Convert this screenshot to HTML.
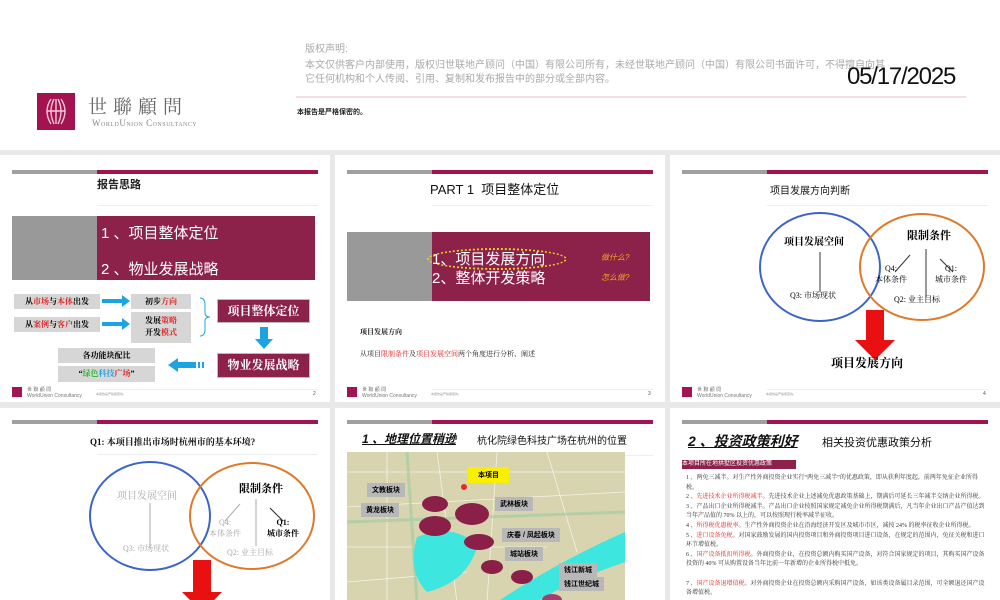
<!DOCTYPE html>
<html><head><meta charset="utf-8"><style>
*{margin:0;padding:0;box-sizing:border-box}
body{width:1000px;height:600px;position:relative;overflow:hidden;background:#e9e9e9;font-family:"Liberation Sans","Noto Sans CJK SC",sans-serif}
.a{position:absolute;white-space:nowrap}
.s{position:absolute;background:#fff;overflow:hidden}
.bg{position:absolute;left:12px;top:15px;width:85px;height:4px;background:#a0a0a0}
.bm{position:absolute;left:97px;top:15px;width:221px;height:4px;background:#a3134f}
.ln{position:absolute;left:97px;top:50px;width:221px;height:1px;background:#eee}
.serif{font-family:"Liberation Serif","Noto Serif CJK SC",serif}
.gb{position:absolute;background:#d6d6d6;font-size:8px;font-weight:bold;text-align:center;font-family:"Liberation Serif","Noto Serif CJK SC",serif}
.mb{position:absolute;background:#8c2249;color:#fff;font-weight:bold;text-align:center;font-family:"Liberation Serif","Noto Serif CJK SC",serif;border:1px solid #bbb}
.r{color:#e02020}
.lab{position:absolute;background:#b8b8b8;font-size:7px;font-weight:bold;padding:2px 5px}
</style></head><body>
<!-- title slide -->
<div class="s" style="left:0;top:0;width:1000px;height:150px">
<svg class="a" style="left:37px;top:93px" width="38" height="37" viewBox="0 0 38 37"><rect width="38" height="37" fill="#a3134f"/><g fill="none" stroke="#f5c8d8" stroke-width="1.4"><path d="M14 6 Q6 18 14 31"/><path d="M24 6 Q32 18 24 31"/><path d="M17 6 Q11 18 17 31"/><path d="M21 6 Q27 18 21 31"/><path d="M10 18 H28"/><path d="M19 6 V31"/></g></svg>
<div class="a serif" style="left:88px;top:92px;font-size:19px;color:#666;letter-spacing:6px">世聯顧問</div>
<div class="a serif" style="left:92px;top:118px;font-size:9px;color:#888;font-variant:small-caps;letter-spacing:.5px">WorldUnion Consultancy</div>
<div class="a" style="left:305px;top:40px;font-size:10px;color:#aaa">版权声明:</div>
<div class="a" style="left:305px;top:59px;font-size:10px;color:#aaa;line-height:14px">本文仅供客户内部使用，版权归世联地产顾问（中国）有限公司所有，未经世联地产顾问（中国）有限公司书面许可，不得擅自向其<br>它任何机构和个人传阅、引用、复制和发布报告中的部分或全部内容。</div>
<div class="a" style="left:847px;top:63px;font-size:24px;color:#111;letter-spacing:-1.2px">05/17/2025</div>
<div class="a" style="left:296px;top:96px;width:670px;height:2px;background:#f3e0e6"></div>
<div class="a" style="left:297px;top:107px;font-size:7px;font-weight:bold;color:#222">本报告是严格保密的。</div>
</div>

<!-- slide 2 -->
<div class="s" style="left:0;top:155px;width:330px;height:247px">
<div class="bg"></div><div class="bm"></div><div class="ln"></div>
<div class="a" style="left:97px;top:21px;font-size:11px;font-weight:bold;color:#222">报告思路</div>
<div class="a" style="left:12px;top:61px;width:85px;height:64px;background:#999"></div>
<div class="a" style="left:97px;top:61px;width:218px;height:64px;background:#8c2249"></div>
<div class="a" style="left:101px;top:67px;font-size:15px;color:#fff">1 、项目整体定位</div>
<div class="a" style="left:101px;top:103px;font-size:15px;color:#fff">2 、物业发展战略</div>
<g></g>
<div class="gb" style="left:14px;top:139px;width:86px;height:15px;line-height:15px">从<span class="r">市场</span>与<span class="r">本体</span>出发</div>
<div class="gb" style="left:14px;top:162px;width:86px;height:15px;line-height:15px">从<span class="r">案例</span>与<span class="r">客户</span>出发</div>
<svg class="a" style="left:102px;top:140px" width="28" height="40"><path d="M0 4h20v-4l8 6-8 6v-4H0z" fill="#1ca4e0"/><path d="M0 27h20v-4l8 6-8 6v-4H0z" fill="#1ca4e0"/></svg>
<div class="gb" style="left:131px;top:139px;width:60px;height:15px;line-height:15px">初步<span class="r">方向</span></div>
<div class="gb" style="left:131px;top:157px;width:60px;height:31px;line-height:12px;padding-top:3px">发展<span class="r">策略</span><br>开发<span class="r">模式</span></div>
<svg class="a" style="left:198px;top:142px" width="14" height="40"><path d="M2 1 Q7 1 7 8 V16 Q7 20 12 20 Q7 20 7 24 V32 Q7 39 2 39" fill="none" stroke="#1ca4e0" stroke-width="1"/></svg>
<div class="mb" style="left:217px;top:144px;width:93px;height:24px;line-height:22px;font-size:12px">项目整体定位</div>
<svg class="a" style="left:255px;top:172px" width="18" height="22"><path d="M5 0h8v12h5l-9 10-9-10h5z" fill="#1ca4e0"/></svg>
<div class="mb" style="left:217px;top:198px;width:93px;height:25px;line-height:23px;font-size:12px">物业发展战略</div>
<svg class="a" style="left:168px;top:203px" width="38" height="14"><path d="M0 7l10-7v4h18v6H10v4z" fill="#1ca4e0"/><rect x="30" y="4" width="2" height="6" fill="#1ca4e0"/><rect x="34" y="4" width="2" height="6" fill="#1ca4e0"/></svg>
<div class="gb" style="left:58px;top:193px;width:97px;height:15px;line-height:15px">各功能块配比</div>
<div class="gb" style="left:58px;top:211px;width:97px;height:16px;line-height:16px">“<span style="color:#2db32d">绿色</span><span style="color:#20a0e0">科技</span><span class="r">广场</span>”</div>
<div class="a" style="left:12px;top:232px;width:10px;height:10px;background:#a3134f"></div>
<div class="a" style="left:27px;top:231px;font-size:5px;color:#777">世 聯 顧 問<br>WorldUnion Consultancy</div>
<div class="a" style="left:97px;top:234px;width:221px;height:1px;background:#eee"></div>
<div class="a" style="left:96px;top:237px;font-size:3px;color:#999">本报告是严格保密的。</div>
<div class="a" style="left:313px;top:236px;font-size:5px;color:#555">2</div>
</div>

<!-- slide 3 -->
<div class="s" style="left:335px;top:155px;width:330px;height:247px">
<div class="bg"></div><div class="bm"></div><div class="ln"></div>
<div class="a" style="left:95px;top:24px;font-size:13px;color:#111">PART 1 &nbsp;项目整体定位</div>
<div class="a" style="left:12px;top:77px;width:85px;height:69px;background:#999"></div>
<div class="a" style="left:97px;top:77px;width:218px;height:69px;background:#8c2249"></div>
<div class="a" style="left:92px;top:93px;width:140px;height:22px;border:2px dotted #e8d020;border-radius:50%"></div>
<div class="a" style="left:97px;top:93px;font-size:15px;color:#fff">1、项目发展方向</div>
<div class="a" style="left:97px;top:112px;font-size:15px;color:#fff">2、整体开发策略</div>
<div class="a" style="left:266px;top:97px;font-size:8px;font-style:italic;color:#f0a020">做什么?</div>
<div class="a" style="left:266px;top:117px;font-size:8px;font-style:italic;color:#f0a020">怎么做?</div>
<div class="a serif" style="left:25px;top:172px;font-size:7px;font-weight:bold;color:#222">项目发展方向</div>
<div class="a serif" style="left:25px;top:194px;font-size:7px;color:#222">从项目<span class="r">限制条件</span>及<span class="r">项目发展空间</span>两个角度进行分析、阐述</div>
<div class="a" style="left:12px;top:232px;width:10px;height:10px;background:#a3134f"></div>
<div class="a" style="left:27px;top:231px;font-size:5px;color:#777">世 聯 顧 問<br>WorldUnion Consultancy</div>
<div class="a" style="left:97px;top:234px;width:221px;height:1px;background:#eee"></div>
<div class="a" style="left:96px;top:237px;font-size:3px;color:#999">本报告是严格保密的。</div>
<div class="a" style="left:313px;top:236px;font-size:5px;color:#555">3</div>
</div>

<!-- slide 4 -->
<div class="s" style="left:670px;top:155px;width:330px;height:247px">
<div class="bg"></div><div class="bm"></div><div class="ln"></div>
<div class="a" style="left:100px;top:27px;font-size:10px;color:#111">项目发展方向判断</div>
<svg class="a" style="left:0;top:0" width="330" height="247"><ellipse cx="150" cy="112" rx="60" ry="54" fill="none" stroke="#3a64c8" stroke-width="2"/><ellipse cx="252" cy="112" rx="62" ry="53" fill="none" stroke="#e07828" stroke-width="2"/><path d="M150 97V137M240 100 225 117M256 94V142M270 104 283 117" stroke="#333" stroke-width="1"/><path d="M196 155h18v30h11l-20 20-20-20h11z" fill="#e81010"/></svg>
<div class="a serif" style="left:114px;top:78px;font-size:10px;font-weight:bold">项目发展空间</div>
<div class="a serif" style="left:120px;top:135px;font-size:8px">Q3: 市场现状</div>
<div class="a serif" style="left:237px;top:72px;font-size:11px;font-weight:bold">限制条件</div>
<div class="a serif" style="left:205px;top:108px;font-size:8px;text-align:center;line-height:11px">Q4:<br>本体条件</div>
<div class="a serif" style="left:265px;top:108px;font-size:8px;text-align:center;line-height:11px">Q1:<br>城市条件</div>
<div class="a serif" style="left:224px;top:139px;font-size:8px">Q2: 业主目标</div>
<div class="a serif" style="left:161px;top:199px;font-size:12px;font-weight:bold">项目发展方向</div>
<div class="a" style="left:12px;top:232px;width:10px;height:10px;background:#a3134f"></div>
<div class="a" style="left:27px;top:231px;font-size:5px;color:#777">世 聯 顧 問<br>WorldUnion Consultancy</div>
<div class="a" style="left:97px;top:234px;width:221px;height:1px;background:#eee"></div>
<div class="a" style="left:96px;top:237px;font-size:3px;color:#999">本报告是严格保密的。</div>
<div class="a" style="left:313px;top:236px;font-size:5px;color:#555">4</div>
</div>

<!-- slide 5 -->
<div class="s" style="left:0;top:408px;width:330px;height:192px">
<div class="bg" style="top:12px"></div><div class="bm" style="top:12px"></div><div class="ln" style="top:46px"></div>
<div class="a serif" style="left:90px;top:27px;font-size:9px;font-weight:bold;color:#111">Q1: 本项目推出市场时杭州市的基本环境?</div>
<svg class="a" style="left:0;top:0" width="330" height="192"><ellipse cx="150" cy="108" rx="60" ry="54" fill="none" stroke="#3a64c8" stroke-width="2"/><ellipse cx="252" cy="108" rx="62" ry="53" fill="none" stroke="#e07828" stroke-width="2"/><path d="M150 95V140M240 96 225 113M256 91V138" stroke="#aaa" stroke-width="1"/><path d="M270 100 283 113" stroke="#222" stroke-width="1"/><path d="M193 152h18v32h11l-20 20-20-20h11z" fill="#e81010"/></svg>
<div class="a serif" style="left:117px;top:79px;font-size:10px;color:#aaa">项目发展空间</div>
<div class="a serif" style="left:123px;top:135px;font-size:8px;color:#aaa">Q3: 市场现状</div>
<div class="a serif" style="left:239px;top:72px;font-size:11px;font-weight:bold">限制条件</div>
<div class="a serif" style="left:209px;top:109px;font-size:8px;color:#aaa;text-align:center;line-height:11px">Q4:<br>本体条件</div>
<div class="a serif" style="left:267px;top:109px;font-size:8px;font-weight:bold;text-align:center;line-height:11px">Q1:<br>城市条件</div>
<div class="a serif" style="left:227px;top:139px;font-size:8px;color:#aaa">Q2: 业主目标</div>
</div>

<!-- slide 6 map -->
<div class="s" style="left:335px;top:408px;width:330px;height:192px">
<div class="bg" style="top:12px"></div><div class="bm" style="top:12px"></div><div class="ln" style="top:47px;left:290px;width:28px"></div>
<div class="a" style="left:27px;top:22px;font-size:12px;font-weight:bold;font-style:italic;text-decoration:underline;color:#111">1 、地理位置稍逊</div>
<div class="a" style="left:142px;top:24px;font-size:10px;color:#111">杭化院绿色科技广场在杭州的位置</div>
<svg class="a" style="left:12px;top:44px" width="278" height="150"><rect width="278" height="150" fill="#d8d4b0"/><g stroke="#fff" stroke-width=".8" opacity=".7" fill="none"><path d="M0 20H278M0 55 278 40M0 95H200M40 0V150M90 0 110 150M150 0 140 150M200 0 230 100M0 130 120 120"/></g><g stroke="#9cc9a0" stroke-width="3" opacity=".6" fill="none"><path d="M0 70 278 60M60 0 70 150"/></g><path d="M70 85 Q110 70 130 95 Q120 130 80 140 Q60 120 70 85Z" fill="#3ee6e0"/><path d="M150 150 Q210 110 278 80 V110 Q220 130 190 150Z" fill="#3ee6e0"/><ellipse cx="88" cy="52" rx="13" ry="8" fill="#8a2048"/><ellipse cx="88" cy="74" rx="16" ry="10" fill="#8a2048"/><ellipse cx="125" cy="62" rx="17" ry="11" fill="#8a2048"/><ellipse cx="132" cy="90" rx="15" ry="8" fill="#8a2048"/><ellipse cx="145" cy="115" rx="11" ry="7" fill="#8a2048"/><ellipse cx="175" cy="125" rx="11" ry="7" fill="#8a2048"/><ellipse cx="205" cy="148" rx="10" ry="6" fill="#a04070"/><circle cx="117" cy="35" r="3" fill="#e03020"/></svg>
<div class="lab" style="left:133px;top:59px;background:#f8f000;padding:3px 10px">本项目</div>
<div class="lab" style="left:32px;top:75px">文教板块</div>
<div class="lab" style="left:26px;top:95px">黄龙板块</div>
<div class="lab" style="left:160px;top:89px">武林板块</div>
<div class="lab" style="left:167px;top:120px">庆春 / 凤起板块</div>
<div class="lab" style="left:170px;top:139px">城站板块</div>
<div class="lab" style="left:224px;top:155px">钱江新城</div>
<div class="lab" style="left:224px;top:169px">钱江世纪城</div>
</div>

<!-- slide 7 -->
<div class="s" style="left:670px;top:408px;width:330px;height:192px">
<div class="bg" style="top:12px"></div><div class="bm" style="top:12px"></div>
<div class="a" style="left:18px;top:23px;font-size:14px;font-weight:bold;font-style:italic;text-decoration:underline;color:#111">2 、投资政策利好</div>
<div class="a" style="left:152px;top:26px;font-size:11px;color:#111">相关投资优惠政策分析</div>
<div class="a" style="left:12px;top:52px;width:114px;height:9px;background:#8c2249;color:#fff;font-size:6px;line-height:9px">本项目所在地拱墅区投资优惠政策</div>
<div class="a serif" style="left:16px;top:66px;font-size:6px;color:#333;line-height:9.6px;white-space:normal;width:300px">1 、两免三减半。对生产性外商投资企业实行“两免三减半”的优惠政策，即从获利年度起，前两年免征企业所得税。<br>2 、<span class="r">先进技术企业所得税减半</span>。先进技术企业上述减免优惠政策基础上，期满后可延长三年减半交纳企业所得税。<br>3 、产品出口企业所得税减半。产品出口企业按照国家规定减免企业所得税期满后，凡当年企业出口产品产值达到当年产品值的 70% 以上的，可以按照现行税率减半征收。<br>4 、<span class="r">所得税优惠税率</span>。生产性外商投资企业在沿海经济开发区及城市市区，减按 24% 的税率征收企业所得税。<br>5 、<span class="r">进口设备免税</span>。对国家鼓励发展的国内投资项目和外商投资项目进口设备，在规定的范围内，免征关税和进口环节增值税。<br>6 、<span class="r">国产设备抵扣所得税</span>。外商投资企业，在投资总额内购买国产设备，对符合国家规定的项目，其购买国产设备投资的 40% 可从购置设备当年比前一年新增的企业所得税中抵免。<br><br>7 、<span class="r">国产设备退增值税</span>。对外商投资企业在投资总额内采购国产设备，如该类设备属目录范围，可全额退还国产设备增值税。</div>
</div>
</body></html>
